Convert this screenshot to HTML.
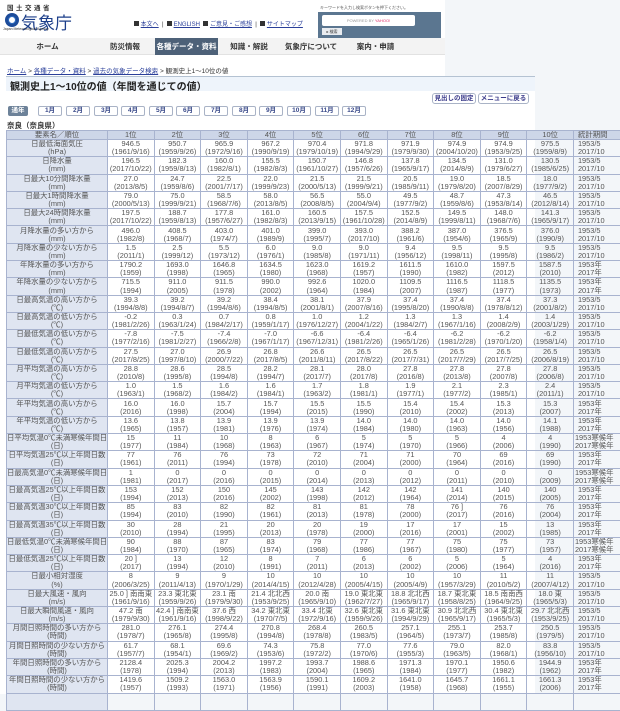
<!DOCTYPE html>
<html><head><meta charset="utf-8">
<style>
*{box-sizing:border-box}
body{margin:0;width:620px;height:694px;overflow:hidden;background:#f3f6f9;font-family:"Liberation Sans","Noto Sans CJK JP",sans-serif;color:#333;position:relative}
.a{position:absolute}
.wh{background:#fff}
.link{color:#2a3f9a;text-decoration:underline}
.nav{left:0;top:38px;width:445px;height:17px;background:#f3f3f3;border-bottom:1px solid #e2e2e2;font-size:7.5px;font-weight:bold;color:#333}
.nav div{position:absolute;top:0;height:17px;line-height:17px;text-align:center}
.tab{top:106px;height:10px;width:24px;border:1px solid #a9b3c6;border-radius:2px;background:#fff;font-size:6.5px;line-height:8px;text-align:center;color:#3a4a8a;font-weight:bold}
.btn{top:93px;height:11px;border:1px solid #a9b3c6;border-radius:3px;background:#fff;font-size:6.5px;line-height:9px;text-align:center;color:#3a3a8a;font-weight:bold}
table{position:absolute;left:6px;top:130px;border-collapse:collapse;table-layout:fixed;width:632px;font-size:7.4px;line-height:8.1px;color:#555}
td,th{border:1px solid #a8b3cf;padding:0;text-align:center;white-space:nowrap;overflow:hidden;font-weight:normal}
th{background:#cdd6e8;height:9px;line-height:8px}
td.l{background:#dfe5f1}
tr.r td{height:17.3px}
</style></head><body>
<div class="a wh" style="left:0;top:0;width:445px;height:76px"></div>
<div class="a wh" style="left:0;top:76px;width:535px;height:618px"></div>
<div class="a" style="left:7px;top:2px;font-size:6.5px;font-weight:bold;letter-spacing:2.5px;color:#333">国土交通省</div>
<div class="a" style="left:5px;top:13px;width:14px;height:14px;border-radius:50%;background:#1d4c9a"></div>
<div class="a" style="left:8px;top:16px;width:8px;height:8px;border-radius:50%;background:#fff;border:1.5px solid #2f6dc0"></div>
<div class="a" style="left:21px;top:9px;font-size:17px;color:#1d3f8a">気象庁</div>
<div class="a" style="left:3px;top:27px;font-size:3.5px;color:#333">Japan Meteorological Agency</div>
<div class="a" style="left:134px;top:19px;font-size:6px;white-space:nowrap">
<span style="display:inline-block;width:5px;height:5px;background:#333"></span> <span class="link">本文へ</span> &nbsp;|&nbsp; <span style="display:inline-block;width:5px;height:5px;background:#333"></span> <span class="link">ENGLISH</span> &nbsp;<span style="display:inline-block;width:5px;height:5px;background:#333"></span> <span class="link">ご意見・ご感想</span> &nbsp;|&nbsp; <span style="display:inline-block;width:5px;height:5px;background:#333"></span> <span class="link">サイトマップ</span></div>
<div class="a" style="left:320px;top:5px;font-size:4px;color:#555">キーワードを入力し検索ボタンを押下ください。</div>
<div class="a" style="left:318px;top:12px;width:123px;height:26px;background:#5b7690"></div>
<div class="a" style="left:322px;top:15px;width:93px;height:11px;background:#fff;border-radius:2px;font-size:4px;text-align:center;line-height:11px;color:#999">POWERED BY <span style="color:#e0306a">YAHOO!</span></div>
<div class="a" style="left:322px;top:28px;width:20px;height:7px;background:#e9ecf0;font-size:4px;line-height:7px;text-align:center">▸ 検索</div>
<div class="a nav">
<div style="left:0;width:95px">ホーム</div>
<div style="left:95px;width:60px">防災情報</div>
<div style="left:155px;width:63px;background:#4d6178;color:#fff">各種データ・資料</div>
<div style="left:218px;width:62px">知識・解説</div>
<div style="left:280px;width:62px">気象庁について</div>
<div style="left:342px;width:67px">案内・申請</div>
</div>
<div class="a" style="left:7px;top:65px;font-size:6.5px;white-space:nowrap"><span class="link">ホーム</span> &gt; <span class="link">各種データ・資料</span> &gt; <span class="link">過去の気象データ検索</span> &gt; 観測史上1～10位の値</div>
<div class="a" style="left:6px;top:76px;height:15px;background:#eef4fb;border-top:1.5px solid #b4c2d2;width:529px"></div>
<div class="a" style="left:10px;top:78px;font-size:10px;font-weight:bold;color:#222">観測史上1～10位の値（年間を通じての値）</div>
<div class="a btn" style="left:432px;width:44px">見出しの固定</div>
<div class="a btn" style="left:478px;width:51px">メニューに戻る</div>
<div class="a tab" style="left:8px;width:20px;background:#6d8299;color:#fff;border-color:#6d8299">通年</div>
<div class="a tab" style="left:38px">1月</div><div class="a tab" style="left:66px">2月</div><div class="a tab" style="left:94px">3月</div><div class="a tab" style="left:121px">4月</div><div class="a tab" style="left:149px">5月</div><div class="a tab" style="left:176px">6月</div><div class="a tab" style="left:204px">7月</div><div class="a tab" style="left:232px">8月</div><div class="a tab" style="left:259px">9月</div><div class="a tab" style="left:287px">10月</div><div class="a tab" style="left:315px">11月</div><div class="a tab" style="left:342px">12月</div>
<div class="a" style="left:7px;top:120px;font-size:7.5px;font-weight:bold;color:#333">奈良（奈良県）</div>
<table>
<colgroup><col style="width:101px"><col style="width:46.6px"><col style="width:46.6px"><col style="width:46.6px"><col style="width:46.6px"><col style="width:46.6px"><col style="width:46.6px"><col style="width:46.6px"><col style="width:46.6px"><col style="width:46.6px"><col style="width:46.6px"><col style="width:65px"></colgroup>
<tr><th>要素名／順位</th><th>1位</th><th>2位</th><th>3位</th><th>4位</th><th>5位</th><th>6位</th><th>7位</th><th>8位</th><th>9位</th><th>10位</th><th style="text-align:left;padding-left:4px">統計期間</th></tr>
<tr class="r"><td class="l">日最低海面気圧<br>(hPa)</td><td>946.5<br>(1961/9/16)</td><td>950.7<br>(1959/9/26)</td><td>965.9<br>(1972/9/16)</td><td>967.2<br>(1990/9/19)</td><td>970.4<br>(1979/10/19)</td><td>971.8<br>(1994/9/29)</td><td>971.9<br>(1979/9/30)</td><td>974.9<br>(2004/10/20)</td><td>974.9<br>(1953/9/25)</td><td>975.5<br>(1959/8/9)</td><td style="text-align:left;padding-left:4px">1953/5<br>2017/10</td></tr>
<tr class="r"><td class="l">日降水量<br>(mm)</td><td>196.5<br>(2017/10/22)</td><td>182.3<br>(1959/8/13)</td><td>160.0<br>(1982/8/1)</td><td>155.5<br>(1982/8/3)</td><td>150.7<br>(1961/10/27)</td><td>146.8<br>(1957/6/26)</td><td>137.8<br>(1965/9/17)</td><td>134.5<br>(2014/8/9)</td><td>131.0<br>(1979/6/27)</td><td>130.5<br>(1985/6/25)</td><td style="text-align:left;padding-left:4px">1953/5<br>2017/10</td></tr>
<tr class="r"><td class="l">日最大10分間降水量<br>(mm)</td><td>27.0<br>(2013/8/5)</td><td>24.7<br>(1959/8/6)</td><td>22.5<br>(2001/7/17)</td><td>22.0<br>(1999/9/23)</td><td>21.5<br>(2000/5/13)</td><td>21.5<br>(1999/9/21)</td><td>20.5<br>(1985/9/11)</td><td>19.0<br>(1979/8/20)</td><td>18.5<br>(2007/8/29)</td><td>18.0<br>(1977/9/2)</td><td style="text-align:left;padding-left:4px">1953/5<br>2017/10</td></tr>
<tr class="r"><td class="l">日最大1時間降水量<br>(mm)</td><td>79.0<br>(2000/5/13)</td><td>75.0<br>(1999/9/21)</td><td>58.5<br>(1968/7/6)</td><td>58.0<br>(2013/8/5)</td><td>56.5<br>(2008/8/5)</td><td>55.0<br>(2004/9/4)</td><td>49.5<br>(1977/9/2)</td><td>48.7<br>(1959/8/6)</td><td>47.3<br>(1953/8/14)</td><td>46.5<br>(2012/8/14)</td><td style="text-align:left;padding-left:4px">1953/5<br>2017/10</td></tr>
<tr class="r"><td class="l">日最大24時間降水量<br>(mm)</td><td>197.5<br>(2017/10/22)</td><td>188.7<br>(1959/8/13)</td><td>177.8<br>(1957/6/27)</td><td>161.0<br>(1982/8/3)</td><td>160.5<br>(2013/9/15)</td><td>157.5<br>(1961/10/28)</td><td>152.5<br>(2014/8/9)</td><td>149.5<br>(1999/8/11)</td><td>148.0<br>(1968/7/6)</td><td>141.3<br>(1965/9/17)</td><td style="text-align:left;padding-left:4px">1953/5<br>2017/10</td></tr>
<tr class="r"><td class="l">月降水量の多い方から<br>(mm)</td><td>496.0<br>(1982/8)</td><td>408.5<br>(1968/7)</td><td>403.0<br>(1974/7)</td><td>401.0<br>(1989/9)</td><td>399.0<br>(1995/7)</td><td>393.0<br>(2017/10)</td><td>388.2<br>(1961/6)</td><td>387.0<br>(1954/6)</td><td>376.5<br>(1965/9)</td><td>376.0<br>(1990/9)</td><td style="text-align:left;padding-left:4px">1953/5<br>2017/10</td></tr>
<tr class="r"><td class="l">月降水量の少ない方から<br>(mm)</td><td>1.5<br>(2011/1)</td><td>2.5<br>(1999/12)</td><td>5.5<br>(1973/12)</td><td>6.0<br>(1976/1)</td><td>9.0<br>(1985/8)</td><td>9.0<br>(1971/11)</td><td>9.4<br>(1956/12)</td><td>9.5<br>(1998/11)</td><td>9.5<br>(1995/8)</td><td>9.5<br>(1986/2)</td><td style="text-align:left;padding-left:4px">1953/5<br>2017/10</td></tr>
<tr class="r"><td class="l">年降水量の多い方から<br>(mm)</td><td>1790.2<br>(1959)</td><td>1693.0<br>(1998)</td><td>1646.8<br>(1965)</td><td>1634.5<br>(1980)</td><td>1623.0<br>(1968)</td><td>1619.2<br>(1957)</td><td>1611.5<br>(1990)</td><td>1610.0<br>(1982)</td><td>1597.5<br>(2012)</td><td>1587.5<br>(2010)</td><td style="text-align:left;padding-left:4px">1953年<br>2017年</td></tr>
<tr class="r"><td class="l">年降水量の少ない方から<br>(mm)</td><td>715.5<br>(1994)</td><td>911.0<br>(2005)</td><td>911.5<br>(1978)</td><td>990.0<br>(2002)</td><td>992.6<br>(1964)</td><td>1020.0<br>(1984)</td><td>1109.5<br>(2007)</td><td>1116.5<br>(1987)</td><td>1118.5<br>(1977)</td><td>1135.5<br>(1973)</td><td style="text-align:left;padding-left:4px">1953年<br>2017年</td></tr>
<tr class="r"><td class="l">日最高気温の高い方から<br>(℃)</td><td>39.3<br>(1994/8/8)</td><td>39.2<br>(1994/8/7)</td><td>39.2<br>(1994/8/6)</td><td>38.4<br>(1994/8/5)</td><td>38.1<br>(2001/8/1)</td><td>37.9<br>(2007/8/16)</td><td>37.4<br>(1995/8/20)</td><td>37.4<br>(1990/8/8)</td><td>37.4<br>(1978/8/12)</td><td>37.3<br>(2001/8/2)</td><td style="text-align:left;padding-left:4px">1953/5<br>2017/10</td></tr>
<tr class="r"><td class="l">日最高気温の低い方から<br>(℃)</td><td>-0.2<br>(1981/2/26)</td><td>0.3<br>(1963/1/24)</td><td>0.7<br>(1984/2/17)</td><td>0.8<br>(1959/1/17)</td><td>1.0<br>(1976/12/27)</td><td>1.2<br>(2004/1/22)</td><td>1.3<br>(1984/2/7)</td><td>1.3<br>(1967/1/16)</td><td>1.4<br>(2008/2/9)</td><td>1.4<br>(2003/1/29)</td><td style="text-align:left;padding-left:4px">1953/5<br>2017/10</td></tr>
<tr class="r"><td class="l">日最低気温の低い方から<br>(℃)</td><td>-7.8<br>(1977/2/16)</td><td>-7.5<br>(1981/2/27)</td><td>-7.4<br>(1966/2/8)</td><td>-7.0<br>(1967/1/17)</td><td>-6.6<br>(1967/12/31)</td><td>-6.4<br>(1981/2/26)</td><td>-6.4<br>(1965/1/26)</td><td>-6.2<br>(1981/2/28)</td><td>-6.2<br>(1970/1/20)</td><td>-6.2<br>(1958/1/4)</td><td style="text-align:left;padding-left:4px">1953/5<br>2017/10</td></tr>
<tr class="r"><td class="l">日最低気温の高い方から<br>(℃)</td><td>27.5<br>(2017/8/25)</td><td>27.0<br>(1997/8/10)</td><td>26.9<br>(2000/7/22)</td><td>26.8<br>(2017/8/5)</td><td>26.6<br>(2011/8/11)</td><td>26.5<br>(2017/8/22)</td><td>26.5<br>(2017/7/31)</td><td>26.5<br>(2017/7/29)</td><td>26.5<br>(2017/7/25)</td><td>26.5<br>(2006/8/19)</td><td style="text-align:left;padding-left:4px">1953/5<br>2017/10</td></tr>
<tr class="r"><td class="l">月平均気温の高い方から<br>(℃)</td><td>28.8<br>(2010/8)</td><td>28.6<br>(1995/8)</td><td>28.5<br>(1994/8)</td><td>28.2<br>(1994/7)</td><td>28.1<br>(2017/7)</td><td>28.0<br>(2017/8)</td><td>27.8<br>(2016/8)</td><td>27.8<br>(2013/8)</td><td>27.8<br>(2007/8)</td><td>27.8<br>(2006/8)</td><td style="text-align:left;padding-left:4px">1953/5<br>2017/10</td></tr>
<tr class="r"><td class="l">月平均気温の低い方から<br>(℃)</td><td>1.0<br>(1963/1)</td><td>1.5<br>(1968/2)</td><td>1.6<br>(1984/2)</td><td>1.6<br>(1984/1)</td><td>1.7<br>(1963/2)</td><td>1.8<br>(1981/1)</td><td>1.9<br>(1977/1)</td><td>2.1<br>(1977/2)</td><td>2.3<br>(1985/1)</td><td>2.4<br>(2011/1)</td><td style="text-align:left;padding-left:4px">1953/5<br>2017/10</td></tr>
<tr class="r"><td class="l">年平均気温の高い方から<br>(℃)</td><td>16.0<br>(2016)</td><td>16.0<br>(1998)</td><td>15.7<br>(2004)</td><td>15.7<br>(1994)</td><td>15.5<br>(2015)</td><td>15.5<br>(1990)</td><td>15.4<br>(2010)</td><td>15.4<br>(2002)</td><td>15.3<br>(2013)</td><td>15.3<br>(2007)</td><td style="text-align:left;padding-left:4px">1953年<br>2017年</td></tr>
<tr class="r"><td class="l">年平均気温の低い方から<br>(℃)</td><td>13.6<br>(1965)</td><td>13.8<br>(1957)</td><td>13.9<br>(1981)</td><td>13.9<br>(1976)</td><td>13.9<br>(1974)</td><td>14.0<br>(1984)</td><td>14.0<br>(1980)</td><td>14.0<br>(1963)</td><td>14.0<br>(1956)</td><td>14.1<br>(1988)</td><td style="text-align:left;padding-left:4px">1953年<br>2017年</td></tr>
<tr class="r"><td class="l">日平均気温0℃未満寒候年間日数<br>(日)</td><td>15<br>(1977)</td><td>11<br>(1984)</td><td>10<br>(1968)</td><td>8<br>(1963)</td><td>6<br>(1967)</td><td>5<br>(1974)</td><td>5<br>(1970)</td><td>5<br>(1966)</td><td>4<br>(2006)</td><td>4<br>(1990)</td><td style="text-align:left;padding-left:1px">1953寒候年<br>2017寒候年</td></tr>
<tr class="r"><td class="l">日平均気温25℃以上年間日数<br>(日)</td><td>77<br>(1961)</td><td>76<br>(2011)</td><td>76<br>(1994)</td><td>73<br>(1978)</td><td>72<br>(2010)</td><td>71<br>(2004)</td><td>71<br>(2000)</td><td>70<br>(1964)</td><td>69<br>(2016)</td><td>69<br>(1990)</td><td style="text-align:left;padding-left:4px">1953年<br>2017年</td></tr>
<tr class="r"><td class="l">日最高気温0℃未満寒候年間日数<br>(日)</td><td>1<br>(1981)</td><td>0<br>(2017)</td><td>0<br>(2016)</td><td>0<br>(2015)</td><td>0<br>(2014)</td><td>0<br>(2013)</td><td>0<br>(2012)</td><td>0<br>(2011)</td><td>0<br>(2010)</td><td>0<br>(2009)</td><td style="text-align:left;padding-left:1px">1953寒候年<br>2017寒候年</td></tr>
<tr class="r"><td class="l">日最高気温25℃以上年間日数<br>(日)</td><td>153<br>(1994)</td><td>152<br>(2013)</td><td>150<br>(2016)</td><td>145<br>(2002)</td><td>143<br>(1998)</td><td>142<br>(2012)</td><td>142<br>(1964)</td><td>141<br>(2014)</td><td>140<br>(2015)</td><td>140<br>(2005)</td><td style="text-align:left;padding-left:4px">1953年<br>2017年</td></tr>
<tr class="r"><td class="l">日最高気温30℃以上年間日数<br>(日)</td><td>85<br>(1994)</td><td>83<br>(2010)</td><td>82<br>(1990)</td><td>82<br>(1961)</td><td>81<br>(2013)</td><td>81<br>(1978)</td><td>78<br>(2000)</td><td>76 ]<br>(2017)</td><td>76<br>(2016)</td><td>76<br>(2004)</td><td style="text-align:left;padding-left:4px">1953年<br>2017年</td></tr>
<tr class="r"><td class="l">日最高気温35℃以上年間日数<br>(日)</td><td>30<br>(2010)</td><td>28<br>(1994)</td><td>21<br>(1995)</td><td>20<br>(2013)</td><td>20<br>(1978)</td><td>19<br>(2000)</td><td>17<br>(2016)</td><td>17<br>(2001)</td><td>15<br>(2002)</td><td>13<br>(1985)</td><td style="text-align:left;padding-left:4px">1953年<br>2017年</td></tr>
<tr class="r"><td class="l">日最低気温0℃未満寒候年間日数<br>(日)</td><td>90<br>(1984)</td><td>88<br>(1970)</td><td>87<br>(1965)</td><td>83<br>(1974)</td><td>79<br>(1968)</td><td>77<br>(1986)</td><td>77<br>(1967)</td><td>75<br>(1980)</td><td>75<br>(1977)</td><td>73<br>(1957)</td><td style="text-align:left;padding-left:1px">1953寒候年<br>2017寒候年</td></tr>
<tr class="r"><td class="l">日最低気温25℃以上年間日数<br>(日)</td><td>20 ]<br>(2017)</td><td>13<br>(1994)</td><td>12<br>(2010)</td><td>8<br>(1991)</td><td>7<br>(2011)</td><td>6<br>(2013)</td><td>6<br>(2002)</td><td>5<br>(2006)</td><td>5<br>(1964)</td><td>4<br>(2016)</td><td style="text-align:left;padding-left:4px">1953年<br>2017年</td></tr>
<tr class="r"><td class="l">日最小相対湿度<br>(%)</td><td>8<br>(2006/3/25)</td><td>9<br>(2011/4/13)</td><td>9<br>(1970/1/29)</td><td>10<br>(2014/4/15)</td><td>10<br>(2012/4/28)</td><td>10<br>(2005/4/15)</td><td>10<br>(2005/4/9)</td><td>10<br>(1957/3/29)</td><td>11<br>(2010/5/2)</td><td>11<br>(2007/4/12)</td><td style="text-align:left;padding-left:4px">1953/5<br>2017/10</td></tr>
<tr class="r"><td class="l">日最大風速・風向<br>(m/s)</td><td>25.0 ] 南南東<br>(1961/9/16)</td><td>23.3 東北東<br>(1959/9/26)</td><td>23.1 南<br>(1979/9/30)</td><td>21.4 北北西<br>(1953/9/25)</td><td>20.0 南<br>(1965/9/10)</td><td>19.0 東北東<br>(1962/7/27)</td><td>18.8 北北西<br>(1965/9/17)</td><td>18.7 東北東<br>(1958/8/25)</td><td>18.5 南南西<br>(1964/9/25)</td><td>18.0 東<br>(1965/5/3)</td><td style="text-align:left;padding-left:4px">1953/5<br>2017/10</td></tr>
<tr class="r"><td class="l">日最大瞬間風速・風向<br>(m/s)</td><td>47.2 南<br>(1979/9/30)</td><td>42.4 ] 南南東<br>(1961/9/16)</td><td>37.6 西<br>(1998/9/22)</td><td>34.2 東北東<br>(1970/7/5)</td><td>33.4 北東<br>(1972/9/16)</td><td>32.6 東北東<br>(1959/9/26)</td><td>31.6 東北東<br>(1994/9/29)</td><td>30.9 北北西<br>(1965/9/17)</td><td>30.4 東北東<br>(1965/5/3)</td><td>29.7 北北西<br>(1953/9/25)</td><td style="text-align:left;padding-left:4px">1953/5<br>2017/10</td></tr>
<tr class="r"><td class="l">月間日照時間の多い方から<br>(時間)</td><td>281.0<br>(1978/7)</td><td>276.1<br>(1965/8)</td><td>274.4<br>(1995/8)</td><td>270.8<br>(1994/8)</td><td>268.4<br>(1978/8)</td><td>260.5<br>(1983/5)</td><td>257.1<br>(1964/5)</td><td>255.1<br>(1973/7)</td><td>253.7<br>(1985/8)</td><td>250.5<br>(1979/5)</td><td style="text-align:left;padding-left:4px">1953/5<br>2017/10</td></tr>
<tr class="r"><td class="l">月間日照時間の少ない方から<br>(時間)</td><td>61.7<br>(1957/7)</td><td>68.1<br>(1954/1)</td><td>69.6<br>(1969/2)</td><td>74.3<br>(1953/6)</td><td>75.8<br>(1972/2)</td><td>77.0<br>(1970/6)</td><td>77.6<br>(1955/3)</td><td>79.0<br>(1963/5)</td><td>82.0<br>(1968/1)</td><td>83.8<br>(1956/10)</td><td style="text-align:left;padding-left:4px">1953/5<br>2017/10</td></tr>
<tr class="r"><td class="l">年間日照時間の多い方から<br>(時間)</td><td>2128.4<br>(1978)</td><td>2025.3<br>(1994)</td><td>2004.2<br>(2013)</td><td>1997.2<br>(1983)</td><td>1993.7<br>(2004)</td><td>1988.6<br>(1965)</td><td>1971.3<br>(1984)</td><td>1970.1<br>(1977)</td><td>1950.6<br>(1982)</td><td>1944.9<br>(1962)</td><td style="text-align:left;padding-left:4px">1953年<br>2017年</td></tr>
<tr class="r"><td class="l">年間日照時間の少ない方から<br>(時間)</td><td>1419.6<br>(1957)</td><td>1509.2<br>(1993)</td><td>1563.0<br>(1971)</td><td>1563.9<br>(1956)</td><td>1590.1<br>(1991)</td><td>1609.2<br>(2003)</td><td>1641.0<br>(1958)</td><td>1645.7<br>(1968)</td><td>1661.1<br>(1955)</td><td>1661.3<br>(2006)</td><td style="text-align:left;padding-left:4px">1953年<br>2017年</td></tr>
<tr class="r"><td class="l">&nbsp;<br>&nbsp;</td><td></td><td></td><td></td><td></td><td></td><td></td><td></td><td></td><td></td><td></td><td></td></tr>
</table>
</body></html>
